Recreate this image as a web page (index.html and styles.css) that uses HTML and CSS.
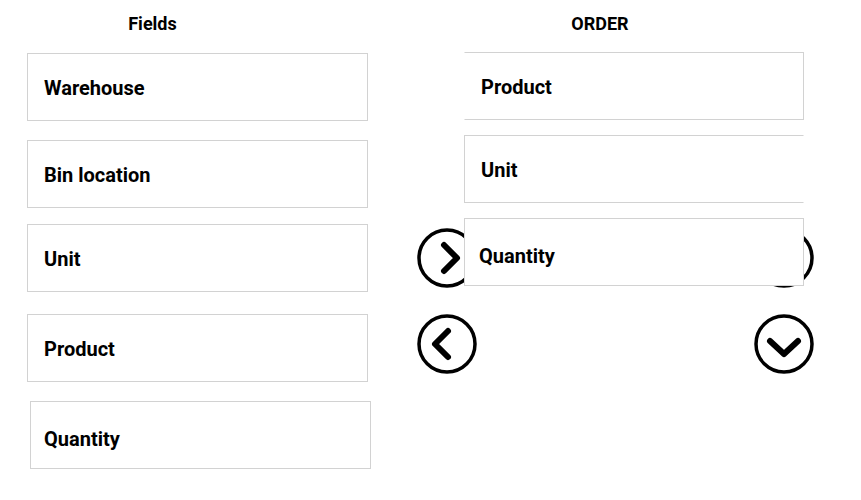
FILE: index.html
```html
<!DOCTYPE html>
<html lang="en">
<head>
    <meta charset="UTF-8">
    <meta name="viewport" content="width=device-width, initial-scale=1.0">
    <title>Order Fields</title>
    <link rel="stylesheet" href="styles.css">
</head>
<body>

    <div class="board">
        <!-- Available fields -->
        <section class="fields-column">
            <h3 class="column-title fields-title">Fields</h3>
            <div class="item-list fields-list">
                <div class="item">Warehouse</div>
                <div class="item">Bin location</div>
                <div class="item item-raised">Unit</div>
                <div class="item">Product</div>
                <div class="item item-shifted item-low">Quantity</div>
            </div>
        </section>

        <!-- Move buttons + chosen order -->
        <section class="order-area">
            <div class="controls">
                <div class="control-row">
                    <button class="round-btn" title="Add">
                        <svg viewBox="0 0 60 60"><circle cx="30" cy="30" r="28"/><polyline points="27,17 40,30 27,43"/></svg>
                    </button>
                    <button class="round-btn" title="Move up">
                        <svg viewBox="0 0 60 60"><circle cx="30" cy="30" r="28"/><polyline points="16,33 30,20 44,33"/></svg>
                    </button>
                </div>
                <div class="control-row">
                    <button class="round-btn" title="Remove">
                        <svg viewBox="0 0 60 60"><circle cx="30" cy="30" r="28"/><polyline points="31,17 18,30 31,43"/></svg>
                    </button>
                    <button class="round-btn" title="Move down">
                        <svg viewBox="0 0 60 60"><circle cx="30" cy="30" r="28"/><polyline points="16,27 30,40 44,27"/></svg>
                    </button>
                </div>
            </div>

            <div class="order-column">
                <h3 class="column-title order-title">ORDER</h3>
                <div class="item-list order-list">
                    <div class="item item-open-left">Product</div>
                    <div class="item item-open-right">Unit</div>
                    <div class="item item-tight item-low">Quantity</div>
                </div>
            </div>
        </section>
    </div>

</body>
</html>
```

FILE: styles.css
```css
body {
    margin: 0;
    padding: 0;
    font-family: Roboto, "Liberation Sans", sans-serif;
    background-color: #fff;
    color: #000;
}

.board {
    display: flex;
    padding-top: 14px;
}

/* Column headings */
.column-title {
    margin: 0;
    font-size: 18px;
    line-height: 20px;
    font-weight: 700;
    text-align: center;
}

.fields-title {
    padding-right: 90px;
    margin-bottom: 19px;
}

.order-title {
    padding-right: 68px;
    margin-bottom: 18px;
}

/* Field boxes */
.item-list {
    display: flex;
    flex-direction: column;
}

.fields-list {
    gap: 19px;
}

.order-list {
    gap: 15px;
}

.item {
    box-sizing: border-box;
    height: 68px;
    display: flex;
    align-items: center;
    padding-left: 16px;
    padding-top: 2px;
    border: 1px solid #d2d2d2;
    background-color: #fff;
    font-size: 20px;
    font-weight: 700;
}

.item-low {
    padding-top: 7px;
}

.item-raised {
    margin-top: -3px;
    margin-bottom: 3px;
}

.item-shifted {
    margin-left: 3px;
    margin-right: -3px;
    padding-left: 13px;
}

.item-tight {
    padding-left: 14px;
}

.item-open-left {
    border-left-color: transparent;
}

.item-open-right {
    border-right-color: transparent;
}

/* Left column */
.fields-column {
    margin-left: 27px;
    width: 341px;
}

/* Right side: buttons sit under the order list */
.order-area {
    margin-left: 49px;
    width: 397px;
    display: grid;
}

.controls,
.order-column {
    grid-area: 1 / 1;
}

.controls {
    padding-top: 214px;
    display: flex;
    flex-direction: column;
    gap: 26px;
}

.control-row {
    display: flex;
    justify-content: space-between;
}

.round-btn {
    width: 60px;
    height: 60px;
    padding: 0;
    border: none;
    background: none;
    cursor: pointer;
}

.round-btn svg {
    display: block;
    width: 60px;
    height: 60px;
    fill: none;
    stroke: #000;
}

.round-btn circle {
    stroke-width: 3.5;
}

.round-btn polyline {
    stroke-width: 6;
    stroke-linecap: round;
    stroke-linejoin: round;
}

.order-column {
    margin-left: 47px;
    width: 340px;
}
```
